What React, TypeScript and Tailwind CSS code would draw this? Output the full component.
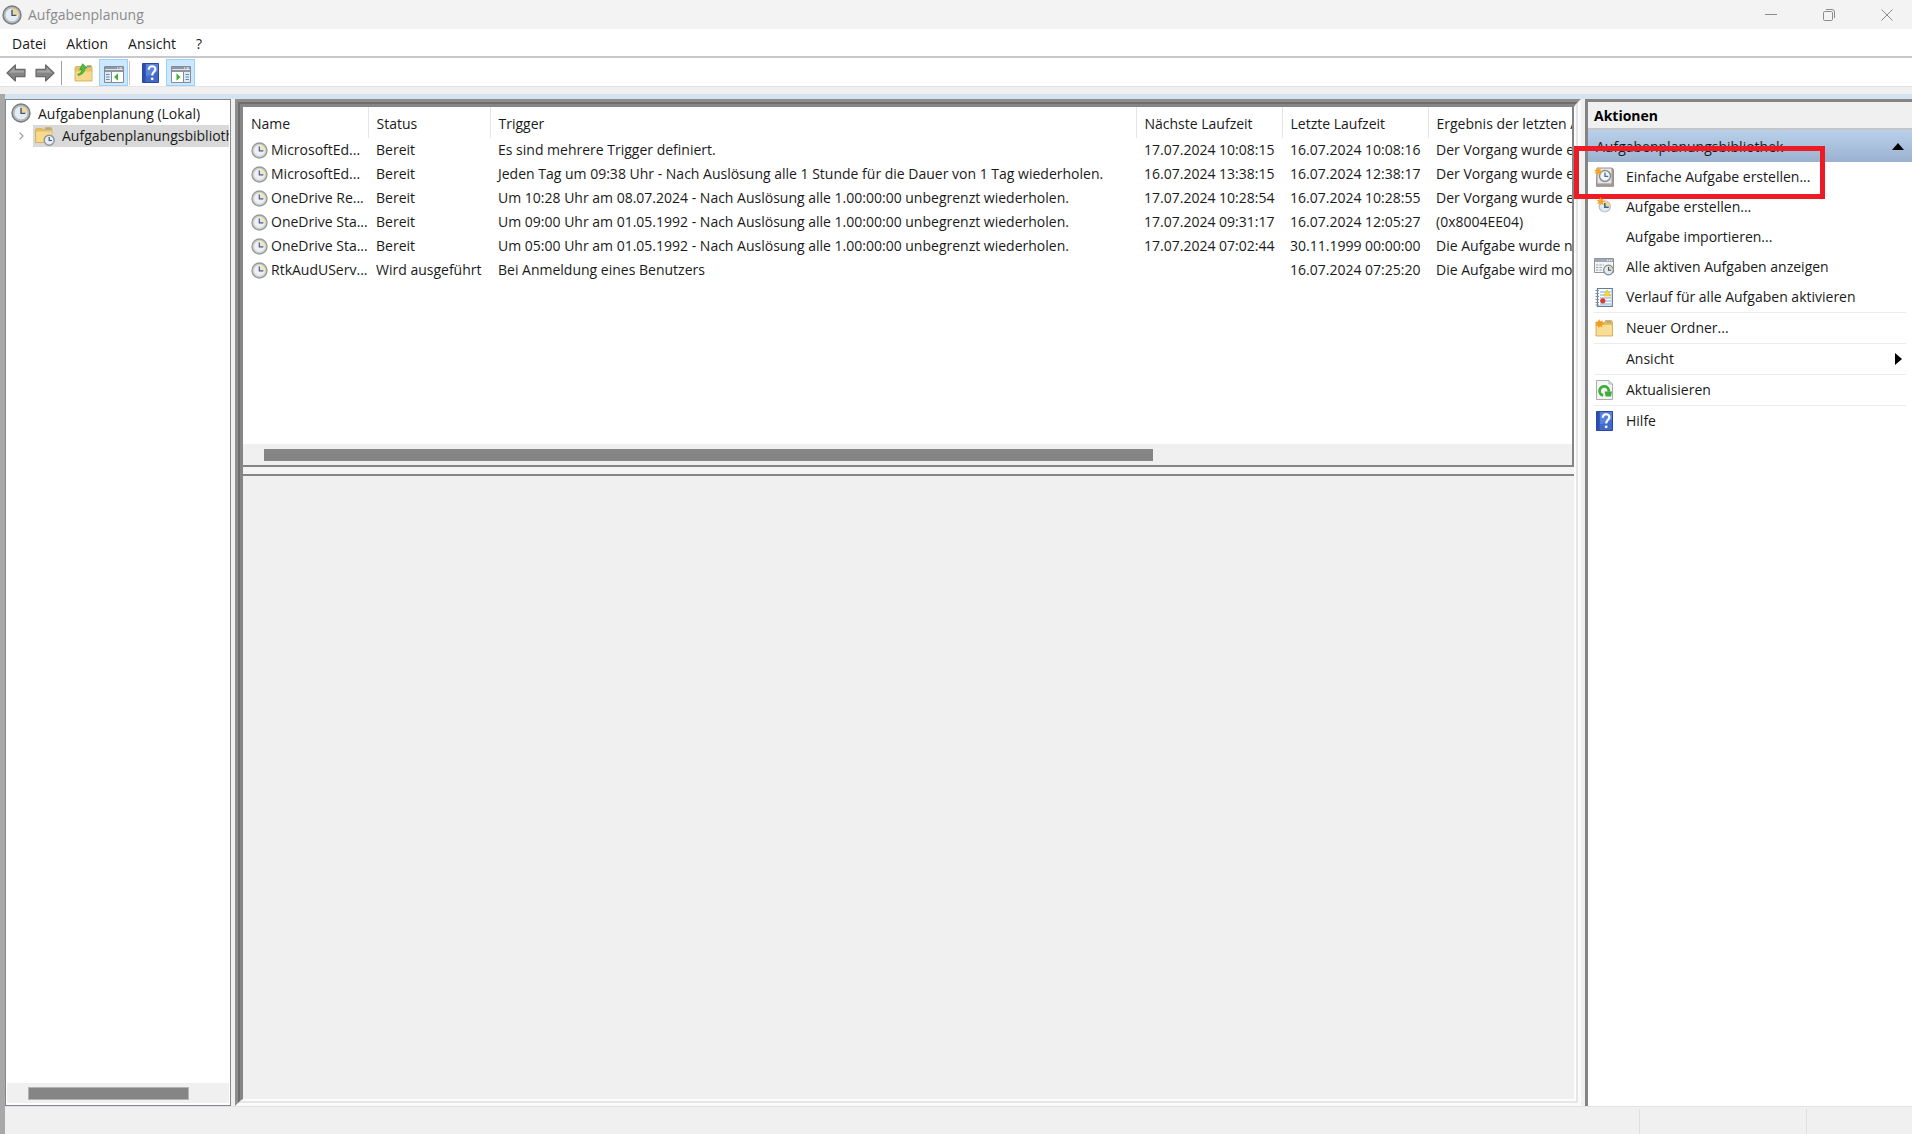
import React from 'react';

interface ITask {
  name: string;
  status: string;
  trigger: string;
  nextRun: string;
  lastRun: string;
  result: string;
}

interface IAction {
  label: string;
  icon?: React.ReactElement;
  divider?: boolean;
  submenu?: boolean;
  highlighted?: boolean;
}

const TASKS: ITask[] = [
  {
    name: 'MicrosoftEd...',
    status: 'Bereit',
    trigger: 'Es sind mehrere Trigger definiert.',
    nextRun: '17.07.2024 10:08:15',
    lastRun: '16.07.2024 10:08:16',
    result: 'Der Vorgang wurde erfolgreich beendet.',
  },
  {
    name: 'MicrosoftEd...',
    status: 'Bereit',
    trigger: 'Jeden Tag um 09:38 Uhr - Nach Auslösung alle 1 Stunde für die Dauer von 1 Tag wiederholen.',
    nextRun: '16.07.2024 13:38:15',
    lastRun: '16.07.2024 12:38:17',
    result: 'Der Vorgang wurde erfolgreich beendet.',
  },
  {
    name: 'OneDrive Re...',
    status: 'Bereit',
    trigger: 'Um 10:28 Uhr am 08.07.2024 - Nach Auslösung alle 1.00:00:00 unbegrenzt wiederholen.',
    nextRun: '17.07.2024 10:28:54',
    lastRun: '16.07.2024 10:28:55',
    result: 'Der Vorgang wurde erfolgreich beendet.',
  },
  {
    name: 'OneDrive Sta...',
    status: 'Bereit',
    trigger: 'Um 09:00 Uhr am 01.05.1992 - Nach Auslösung alle 1.00:00:00 unbegrenzt wiederholen.',
    nextRun: '17.07.2024 09:31:17',
    lastRun: '16.07.2024 12:05:27',
    result: '(0x8004EE04)',
  },
  {
    name: 'OneDrive Sta...',
    status: 'Bereit',
    trigger: 'Um 05:00 Uhr am 01.05.1992 - Nach Auslösung alle 1.00:00:00 unbegrenzt wiederholen.',
    nextRun: '17.07.2024 07:02:44',
    lastRun: '30.11.1999 00:00:00',
    result: 'Die Aufgabe wurde noch nicht ausgeführt.',
  },
  {
    name: 'RtkAudUServ...',
    status: 'Wird ausgeführt',
    trigger: 'Bei Anmeldung eines Benutzers',
    nextRun: '',
    lastRun: '16.07.2024 07:25:20',
    result: 'Die Aufgabe wird momentan ausgeführt.',
  },
];

function ClockIcon({ className }: { className: string }) {
  return (
    <svg viewBox="0 0 20 20" className={className} aria-hidden="true">
      <circle cx="10" cy="10" r="8.9" fill="#c3c6c8" stroke="#7d8082" strokeWidth="1.6" />
      <circle cx="10" cy="10" r="7" fill="#e4edf6" stroke="#a5abb0" strokeWidth="0.8" />
      <path d="M10 10V3.4A6.6 6.6 0 0 1 16.6 10Z" fill="#f3d692" />
      <path d="M10 4.8V10.4H14.4" fill="none" stroke="#3c5a80" strokeWidth="1.4" />
    </svg>
  );
}

function TaskClockIcon() {
  return (
    <svg viewBox="0 0 17 17" className="size-[17px] shrink-0" aria-hidden="true">
      <circle cx="8.5" cy="8.5" r="7.5" fill="#d6d8d7" stroke="#999b9b" strokeWidth="1.4" />
      <circle cx="8.5" cy="8.5" r="5.8" fill="#eef0f2" stroke="#c2c5c6" strokeWidth="0.6" />
      <path d="M8.5 8.5V3A5.5 5.5 0 0 1 14 8.5Z" fill="#e8efb0" />
      <path d="M8.3 4.4V8.9H12.4" fill="none" stroke="#5451a5" strokeWidth="1.2" />
    </svg>
  );
}

function ArrowIcon({ flipped }: { flipped?: boolean }) {
  return (
    <svg viewBox="0 0 20 18" className={flipped ? 'h-[18px] w-5 -scale-x-100' : 'h-[18px] w-5'} aria-hidden="true">
      <path d="M1 9L9.4 1V5.4H19V12.6H9.4V17Z" fill="#858585" stroke="#6a6a6a" strokeWidth="1.2" strokeLinejoin="round" />
      <path d="M2.8 8.7L8.3 3.5V6.5H18V8.6Z" fill="#a4a4a4" />
    </svg>
  );
}

function FolderUpIcon() {
  return (
    <svg viewBox="0 0 19 19" className="size-[19px]" aria-hidden="true">
      <path d="M1 4.5L2 3.5H8L9 5H12L13 2.5H17L18 4V18H1Z" fill="#e9c267" stroke="#d1a84f" strokeWidth="0.8" />
      <path d="M1.6 8.5H17.6V17.4H1.6Z" fill="#f6d98b" />
      <path d="M13 3.6H16.8" stroke="#5a9fd6" strokeWidth="1.2" />
      <path d="M3.8 11.2C6.4 10.6 7.8 8.9 7.9 6.4L5.6 6.8L8.6 0.8L12.8 4.8L10.7 5.5C10.8 9.2 8.2 11.8 4.2 12.4Z" fill="#4dc13c" stroke="#2f9a2a" strokeWidth="0.7" />
    </svg>
  );
}

function PaneIcon({ side }: { side: 'left' | 'right' }) {
  const left = side === 'left';
  return (
    <svg viewBox="0 0 20 17" className="h-[17px] w-5" aria-hidden="true">
      <path d="M0.5 0.5H19.5V16.5H0.5Z" fill="#fff" stroke="#858b94" />
      <path d="M1 1H19V5H1Z" fill="#8d96a1" />
      <path d="M1 3.5H19" stroke="#dfe4ea" />
      <path d="M13 2H14.2M15.4 2H18" stroke="#fff" />
      <path d="M1 5.5H19" stroke="#8d96a1" />
      <path d={left ? 'M1 6H7V16H1Z' : 'M13 6H19V16H13Z'} fill="#e6eaee" />
      <path d={left ? 'M7.5 5.5V16' : 'M12.5 5.5V16'} stroke="#858b94" />
      <path
        d={left ? 'M2 8.5H5.5M2 11H5.5M2 13.5H5.5' : 'M14.5 8.5H18M14.5 11H18M14.5 13.5H18'}
        stroke="#4a8ed0"
        strokeWidth="1.2"
      />
      <path d={left ? 'M14 7.3V14.7L10 11Z' : 'M5.5 7.3V14.7L9.5 11Z'} fill="#42b030" />
    </svg>
  );
}

function HelpIcon() {
  return (
    <svg viewBox="0 0 17 20" className="h-5 w-[17px]" aria-hidden="true">
      <path d="M0.5 0.5H16.5V19.5H0.5Z" fill="#4169c9" stroke="#2848a0" />
      <path d="M1 1H3.6V19H1Z" fill="#2d4eb0" />
      <path d="M4 1H16V8C12 12 8 13 4 13Z" fill="#5b82da" />
      <path
        d="M6.7 6.8C6.8 4.4 8.1 3.2 10 3.2C12 3.2 13.4 4.5 13.4 6.2C13.4 8.8 10.2 9 10.2 12.4"
        fill="none"
        stroke="#fff"
        strokeWidth="2.1"
      />
      <circle cx="10.2" cy="15.8" r="1.4" fill="#fff" />
    </svg>
  );
}

function LibraryIcon() {
  return (
    <svg viewBox="0 0 20 19" className="h-[19px] w-5 shrink-0" aria-hidden="true">
      <path d="M0.5 2.5L1.5 1.5H7L8 3H9.5L10.5 0.5H16L17 2V15.5H0.5Z" fill="#e5bd62" stroke="#d3ab55" strokeWidth="0.8" />
      <path d="M1.2 4.5H16.8V15H1.2Z" fill="#f7da8c" />
      <path d="M11 2H15.6" stroke="#5a9fd6" />
      <circle cx="14.2" cy="13.2" r="5" fill="#e6edf3" stroke="#8b969f" strokeWidth="1.4" />
      <path d="M14.2 10V13.5H17" fill="none" stroke="#3c5a80" strokeWidth="1.2" />
    </svg>
  );
}

const STAR_PATH = 'M5 0L6.2 3L9.2 1.6L8 4.6L11 5.8L8 7L8.8 10L5.8 8.6L4.2 11L3.6 8L0.6 8.4L2.6 5.8L0 4L3.2 3.6Z';

function BasicTaskIcon() {
  return (
    <svg viewBox="0 0 20 20" className="size-5" aria-hidden="true">
      <path d="M3 1H18L19.6 2.5V19.3H2.4Z" fill="#a59b99" stroke="#877c7a" strokeWidth="0.8" />
      <path d="M3.5 1.5H17.4V16.4H3.5Z" fill="#e9e5e3" />
      <circle cx="11" cy="9" r="5.5" fill="#f4f7fa" stroke="#8293a0" strokeWidth="1.5" />
      <path d="M11 5.4V9.3H14.3" fill="none" stroke="#4c6784" strokeWidth="1.3" />
      <path d={STAR_PATH} transform="scale(0.78)" fill="#f5a426" />
    </svg>
  );
}

function NewTaskIcon() {
  return (
    <svg viewBox="0 0 20 20" className="size-5" aria-hidden="true">
      <circle cx="10.8" cy="9.4" r="5.6" fill="#dfeaf2" stroke="#b5bfc8" strokeWidth="1.2" />
      <path d="M10.8 9.4V4A5.4 5.4 0 0 1 16.2 9.4Z" fill="#f3d48d" />
      <path d="M10.8 6V10.2H14.8" fill="none" stroke="#3f6691" strokeWidth="1.6" />
      <path d={STAR_PATH} transform="translate(2.5 0) scale(0.8)" fill="#f5a426" />
    </svg>
  );
}

function RunningTasksIcon() {
  return (
    <svg viewBox="0 0 20 18" className="h-[18px] w-5" aria-hidden="true">
      <path d="M0.5 0.5H19.5V14.5H0.5Z" fill="#f3f5f7" stroke="#8d96a0" />
      <path d="M1 1H19V4H1Z" fill="#a0a9b4" />
      <path d="M13 2.3H18" stroke="#fff" strokeDasharray="1.2 0.8" />
      <path d="M2 7H10M2 9.5H9M2 12H8" stroke="#959faa" strokeDasharray="2.4 1" />
      <circle cx="14.5" cy="12" r="4.8" fill="#e2ecf2" stroke="#76858f" strokeWidth="1.2" />
      <path d="M14.5 12V8A4 4 0 0 1 18.5 12Z" fill="#eed58f" />
      <path d="M14.5 9V12.3H17.2" fill="none" stroke="#3c5a80" strokeWidth="1.1" />
    </svg>
  );
}

function HistoryIcon() {
  return (
    <svg viewBox="0 0 18 19" className="h-[19px] w-[18px]" aria-hidden="true">
      <path d="M2.5 0.5H17.3V18.3H2.5Z" fill="#fff" stroke="#5f7e9f" strokeWidth="1.2" />
      <path d="M5 4H16M5 7H16M5 10H16M5 13H16M5 16H16" stroke="#7fa5cf" strokeWidth="1.1" />
      <path d="M0.5 2.5H4M0.5 5.5H4M0.5 8.5H4M0.5 11.5H4M0.5 14.5H4M0.5 17H4" stroke="#8a8f95" strokeWidth="1.2" />
      <path d="M12 1.8L15.4 8H8.8Z" fill="#f8d938" stroke="#e0c02a" strokeWidth="0.8" />
      <circle cx="7.8" cy="12.8" r="2.6" fill="#da3c33" />
    </svg>
  );
}

function NewFolderIcon() {
  return (
    <svg viewBox="0 0 18 18" className="size-[18px]" aria-hidden="true">
      <path d="M1 3H8L9 4.5L10.5 1.5H16.5L17.5 3V17H1Z" fill="#e5bb5e" stroke="#d0a64c" strokeWidth="0.8" />
      <path d="M1.6 6H17V16.4H1.6Z" fill="#f8dd94" />
      <path d="M11.5 3H16" stroke="#6aa5d2" />
      <path d={STAR_PATH} transform="scale(0.85)" fill="#f39d1f" />
    </svg>
  );
}

function RefreshIcon() {
  return (
    <svg viewBox="0 0 17 20" className="h-5 w-[17px]" aria-hidden="true">
      <path d="M0.5 0.5H13L16.5 4V19.5H0.5Z" fill="#f4f6f4" stroke="#a9adab" />
      <path d="M13 0.5V4H16.5" fill="#dde0de" stroke="#a9adab" strokeWidth="0.8" />
      <path d="M7.2 15.4A4.6 4.6 0 1 1 12.7 11.6" fill="none" stroke="#3fae3a" strokeWidth="2.8" />
      <path d="M8.6 11.4H16L15 16.4H9.6Z" fill="#3fae3a" />
    </svg>
  );
}

const ACTIONS: IAction[] = [
  { label: 'Einfache Aufgabe erstellen...', icon: <BasicTaskIcon />, highlighted: true },
  { label: 'Aufgabe erstellen...', icon: <NewTaskIcon /> },
  { label: 'Aufgabe importieren...' },
  { label: 'Alle aktiven Aufgaben anzeigen', icon: <RunningTasksIcon /> },
  { label: 'Verlauf für alle Aufgaben aktivieren', icon: <HistoryIcon />, divider: true },
  { label: 'Neuer Ordner...', icon: <NewFolderIcon />, divider: true },
  { label: 'Ansicht', submenu: true, divider: true },
  { label: 'Aktualisieren', icon: <RefreshIcon />, divider: true },
  { label: 'Hilfe', icon: <HelpIcon /> },
];

function TitleBar() {
  return (
    <header className="flex h-[29px] shrink-0 items-center bg-[#f3f3f3] pl-0.5 text-[#8b8b8b]">
      <ClockIcon className="size-5" />
      <h1 className="ml-1.5 flex-1">Aufgabenplanung</h1>
      <button type="button" aria-label="Minimieren" className="flex w-[58px] justify-center">
        <svg viewBox="0 0 12 12" className="size-3" aria-hidden="true">
          <path d="M0 5.5H12" stroke="#8b8b8b" />
        </svg>
      </button>
      <button type="button" aria-label="Verkleinern" className="flex w-[58px] justify-center">
        <svg viewBox="0 0 12 12" className="size-3" fill="none" stroke="#8b8b8b" aria-hidden="true">
          <rect x="0.5" y="2.5" width="9" height="9" rx="1.2" />
          <path d="M3 0.5H9A2.5 2.5 0 0 1 11.5 3V9" />
        </svg>
      </button>
      <button type="button" aria-label="Schließen" className="flex w-[54px] justify-center pl-1">
        <svg viewBox="0 0 12 12" className="size-3" aria-hidden="true">
          <path d="M0.5 0.5L11.5 11.5M11.5 0.5L0.5 11.5" stroke="#8b8b8b" />
        </svg>
      </button>
    </header>
  );
}

function Toolbar() {
  return (
    <div className="flex h-[29px] shrink-0 items-center border-b border-[#e4e4e4] bg-white pt-px pl-1.5">
      <button type="button" aria-label="Zurück"><ArrowIcon /></button>
      <button type="button" aria-label="Vorwärts" className="ml-[9px]"><ArrowIcon flipped /></button>
      <span className="ml-1.5 h-6 w-px bg-[#a0a0a0]" />
      <button type="button" aria-label="Eine Ebene nach oben" className="ml-3"><FolderUpIcon /></button>
      <button
        type="button"
        aria-label="Konsolenstruktur ein-/ausblenden"
        className="ml-1.5 flex h-[27px] w-[29px] items-center justify-center border border-[#99d1ff] bg-[#cce8ff] pt-1"
      >
        <PaneIcon side="left" />
      </button>
      <span className="ml-px h-6 w-px bg-[#c8c8c8]" />
      <button type="button" aria-label="Hilfe" className="ml-3"><HelpIcon /></button>
      <button
        type="button"
        aria-label="Aktionsbereich ein-/ausblenden"
        className="ml-[7px] flex h-[27px] w-[29px] items-center justify-center border border-[#99d1ff] bg-[#cce8ff] pt-1"
      >
        <PaneIcon side="right" />
      </button>
    </div>
  );
}

function TreePanel() {
  return (
    <nav className="flex w-[226px] shrink-0 flex-col overflow-hidden border border-[#828790] bg-white px-px pt-px pb-0.5">
      <div className="flex h-6 items-center pl-1">
        <ClockIcon className="size-5" />
        <span className="ml-[7px] pt-0.5 whitespace-nowrap">Aufgabenplanung (Lokal)</span>
      </div>
      <div className="flex h-[22px] items-center">
        <svg viewBox="0 0 5 8" className="mr-[9px] ml-3 h-2 w-[5px] shrink-0" aria-hidden="true">
          <path d="M0.6 0.6L4 4L0.6 7.4" fill="none" stroke="#9a9a9a" strokeWidth="1.2" />
        </svg>
        <div className="flex h-full flex-1 items-center overflow-hidden bg-[#d9d9d9] pl-0.5">
          <LibraryIcon />
          <span className="ml-[7px] whitespace-nowrap">Aufgabenplanungsbibliothek</span>
        </div>
      </div>
      <div className="mt-auto flex h-5 items-center bg-[#f0f0f0] pl-[21px]">
        <div className="h-[13px] w-[161px] border border-[#b4b4b4] bg-[#858585]" />
      </div>
    </nav>
  );
}

function TaskTable() {
  return (
    <table className="w-full table-fixed border-collapse whitespace-nowrap">
      <colgroup>
        <col className="w-[125px]" />
        <col className="w-[122px]" />
        <col />
        <col className="w-[146px]" />
        <col className="w-[146px]" />
        <col className="w-[144px]" />
      </colgroup>
      <thead>
        <tr className="h-[31px] [&>th]:overflow-hidden [&>th]:border-r [&>th]:border-[#e5e5e5] [&>th]:pt-0.5 [&>th]:pl-2 [&>th]:text-left [&>th]:font-normal [&>th:last-child]:border-r-0">
          <th>Name</th>
          <th>Status</th>
          <th>Trigger</th>
          <th>Nächste Laufzeit</th>
          <th>Letzte Laufzeit</th>
          <th>Ergebnis der letzten Ausführung</th>
        </tr>
      </thead>
      <tbody>
        {TASKS.map((task, i) => (
          <tr key={i} className="h-6 [&>td]:overflow-hidden [&>td]:pl-2">
            <td>
              <div className="flex items-center gap-[3px]">
                <TaskClockIcon />
                {task.name}
              </div>
            </td>
            <td>{task.status}</td>
            <td>{task.trigger}</td>
            <td>{task.nextRun}</td>
            <td>{task.lastRun}</td>
            <td>{task.result}</td>
          </tr>
        ))}
      </tbody>
    </table>
  );
}

function ActionsPanel() {
  return (
    <aside className="flex w-[327px] shrink-0 flex-col border-t-[3px] border-l-[3px] border-[#848484] bg-white">
      <h2 className="flex h-7 shrink-0 items-center border-b-2 border-[#c6c6c6] bg-[#f0f0f0] pt-0.5 pl-1.5 font-bold text-black">Aktionen</h2>
      <button
        type="button"
        className="flex h-8 shrink-0 items-center justify-between bg-linear-to-b from-[#b9d1ea] to-[#9ab2d0] pt-px pr-2 pl-2"
      >
        <span>Aufgabenplanungsbibliothek</span>
        <svg viewBox="0 0 12 7" className="h-[7px] w-3" aria-hidden="true">
          <path d="M6 0L12 7H0Z" fill="#000" />
        </svg>
      </button>
      <ul className="pr-1.5 pl-1.5">
        {ACTIONS.map((action) => (
          <li key={action.label} className={action.divider ? 'relative border-b border-[#ececec]' : 'relative'}>
            <button type="button" className="flex h-[30px] w-full items-center text-left">
              <span className="flex w-5 justify-center">{action.icon}</span>
              <span className="ml-3 flex-1 whitespace-nowrap">{action.label}</span>
              {action.submenu && (
                <svg viewBox="0 0 7 12" className="mr-1 h-3 w-[7px]" aria-hidden="true">
                  <path d="M0 0L7 6L0 12Z" fill="#000" />
                </svg>
              )}
            </button>
            {action.highlighted && (
              <span className="pointer-events-none absolute -top-4 -left-5 h-[53px] w-[251px] border-5 border-[#ed1c24]" />
            )}
          </li>
        ))}
      </ul>
    </aside>
  );
}

export default function App(): React.ReactElement {
  return (
    <div className="flex h-screen flex-col overflow-hidden bg-[#f0f0f0] font-['Open_Sans','Noto_Sans',sans-serif] text-[14px] leading-5 text-[#1a1a1a]">
      <TitleBar />
      <nav className="flex h-[29px] shrink-0 items-center gap-5 border-b-2 border-[#c9c9cc] bg-white pt-0.5 pl-3">
        <button type="button">Datei</button>
        <button type="button">Aktion</button>
        <button type="button">Ansicht</button>
        <button type="button">?</button>
      </nav>
      <Toolbar />

      <div className="mt-[7px] flex min-h-0 flex-1 border-l-5 border-[#a8a8a8]">
        <div className="flex min-w-0 flex-1 flex-col">
          <div className="h-[5px] shrink-0 bg-[#d5e3f0]" />
          <div className="flex min-h-0 flex-1">
            <TreePanel />

            {/* Bevelled frame: task list above the empty details pane */}
            <main className="mr-1 ml-1 flex min-w-0 flex-1 border-[3px] border-t-[#8e8e8e] border-r-[#fafafa] border-b-[#fafafa] border-l-[#8e8e8e]">
              <div className="flex min-w-0 flex-1 border-2 border-t-[#6f6f6f] border-r-[#e6e6e6] border-b-[#e6e6e6] border-l-[#6f6f6f]">
                <div className="flex min-w-0 flex-1 flex-col border-t-[3px] border-r-2 border-b-2 border-l-[3px] border-t-[#868686] border-r-[#fcfcfc] border-b-[#fcfcfc] border-l-[#868686]">
                  <section className="flex h-[360px] shrink-0 flex-col border-r-2 border-b-2 border-[#858585] bg-white">
                    <div className="min-h-0 flex-1 overflow-hidden">
                      <TaskTable />
                    </div>
                    <div className="flex h-[21px] shrink-0 items-center bg-[#f0f0f0] pl-[21px]">
                      <div className="w-[68%] h-3 bg-[#858585]" />
                    </div>
                  </section>
                  <div className="h-[7px] shrink-0 bg-[#f4f4f4]" />
                  <section className="flex-1 border-t-2 border-[#858585]" />
                </div>
              </div>
            </main>

            <ActionsPanel />
          </div>

          <footer className="flex h-7 shrink-0 justify-end border-t border-[#e2e2e2] pt-0.5">
            <span className="w-[167px] border-l border-[#e0e0e0]" />
            <span className="w-[106px] border-l border-[#e0e0e0]" />
          </footer>
        </div>
      </div>
    </div>
  );
}
